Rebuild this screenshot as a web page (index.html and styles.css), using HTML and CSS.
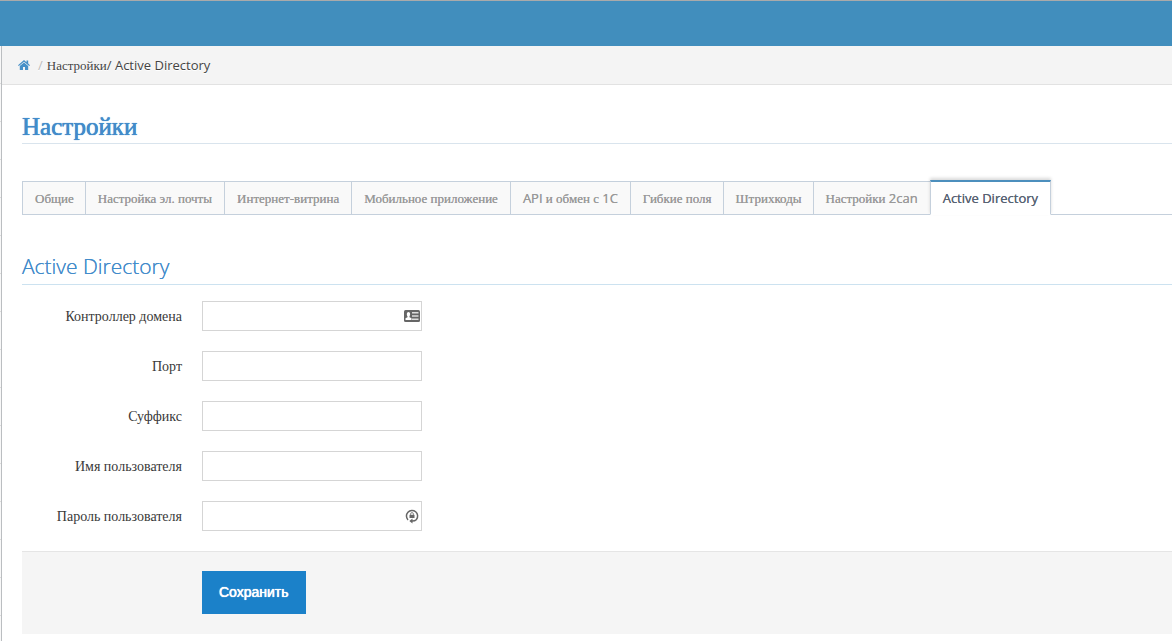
FILE: index.html
```html
<!DOCTYPE html>
<html lang="ru">
<head>
<meta charset="utf-8">
<meta name="viewport" content="width=device-width, initial-scale=1">
<title>Настройки / Active Directory</title>
<link rel="stylesheet" href="styles.css">
</head>
<body>
<header class="navbar"></header>
<div class="layout">
  <aside class="sidebar"></aside>
  <div class="main">
    <nav class="breadcrumbs">
      <a class="home" href="#" aria-label="Главная"><svg width="12" height="10" viewBox="0 0 12 10"><path d="M6 0 0 5.2l.8.9L6 1.7l5.2 4.4.8-.9L10.200 3.600V.6H8.500v1.600z"/><path d="M6 2.600 1.800 6.100V10H5V7h2v3h3.200V6.100z"/></svg></a>
      <span class="divider">/</span>
      <span>Настройки<span class="latin">/ Active Directory</span></span>
    </nav>
    <main class="content">
      <h1 class="title">Настройки</h1>
      <nav class="tabs">
        <a class="tab snug" href="#">Общие</a>
        <a class="tab" href="#">Настройка эл. почты</a>
        <a class="tab" href="#">Интернет-витрина</a>
        <a class="tab" href="#">Мобильное приложение</a>
        <a class="tab" href="#"><span class="latin">API</span> и обмен с <span class="latin">1С</span></a>
        <a class="tab snug" href="#">Гибкие поля</a>
        <a class="tab snug" href="#">Штрихкоды</a>
        <a class="tab" href="#">Настройки <span class="latin">2can</span></a>
        <a class="tab active latin" href="#" aria-current="page">Active Directory</a>
      </nav>
      <h2 class="subtitle">Active Directory</h2>
      <form class="form">
        <div class="row">
          <label for="host">Контроллер домена</label>
          <div class="field">
            <input id="host" type="text">
            <svg class="mark card" width="16" height="12" viewBox="0 0 16 12"><rect width="16" height="12" rx="1.500" fill="#666"/><path d="M1.500 10V8.300l2-1V6.200C2.500 5.200 2.600 2 4.500 2S6.500 5.200 5.500 6.200v1.100l2 1V10z" fill="#fff"/><path d="M8 2h6.500v1.500H8zM8 5.200h6.500v1.500H8zM8 8.400h6.500v1.500H8z" fill="#ddd"/></svg>
          </div>
        </div>
        <div class="row">
          <label for="port">Порт</label>
          <div class="field"><input id="port" type="text"></div>
        </div>
        <div class="row">
          <label for="suffix">Суффикс</label>
          <div class="field"><input id="suffix" type="text"></div>
        </div>
        <div class="row">
          <label for="user">Имя пользователя</label>
          <div class="field"><input id="user" type="text"></div>
        </div>
        <div class="row">
          <label for="password">Пароль пользователя</label>
          <div class="field">
            <input id="password" type="password">
            <svg class="mark lock" width="14" height="15" viewBox="0 0 14 15"><path d="M3 10.900A5.600 5.600 0 1 1 11.500 10.400Q10 12 7 12" fill="none" stroke="#666" stroke-width="1.500"/><path d="M7.500 9.500v5L4.300 12z" fill="#666"/><path d="M4.500 5.800h5V9h-5z" fill="#666"/><path d="M5.600 6V5a1.400 1.400 0 0 1 2.800 0v1" fill="none" stroke="#888"/></svg>
          </div>
        </div>
        <div class="actions"><button class="save" type="submit">Сохранить</button></div>
      </form>
    </main>
  </div>
</div>
</body>
</html>
```
FILE: styles.css
```css
* {
  box-sizing: border-box;
}

body {
  margin: 0;
  background: #fff;
  color: #393939;
  font: 13px/20px "Liberation Serif", serif;
}

.latin {
  font-family: "Open Sans", sans-serif;
}

.navbar {
  height: 46px;
  border-top: 1px solid #aaa;
  background: #418ebd;
}

.layout {
  display: flex;
  min-height: calc(100vh - 46px);
}

.sidebar {
  flex: none;
  width: 2px;
  border-right: 1px solid #bbbec1;
  background: repeating-linear-gradient(#f8f8f8 0 37px, #ddd 37px 38px);
}

.main {
  flex: 1;
  min-width: 0;
}

.breadcrumbs {
  display: flex;
  align-items: center;
  height: 39px;
  padding-left: 16px;
  border-bottom: 1px solid #e2e2e2;
  background: #f4f4f4;
  color: #444;
  text-shadow: 0 1px 0 #fff;
}

.home {
  display: flex;
  margin-right: 8px;
  fill: #4590c8;
}

.divider {
  margin-right: 4px;
  color: #bbb;
  font-family: "Open Sans", sans-serif;
}

.content {
  padding: 27px 0 8px 20px;
}

.title {
  margin: 0 0 36px;
  padding-bottom: 2px;
  border-bottom: 1px solid #d9e4ed;
  color: #428bca;
  font-size: 25px;
  line-height: 29px;
  font-weight: 400;
  text-shadow: 0 0 0 currentColor, 0 0 1px currentColor;
}

.tabs {
  display: flex;
  align-items: flex-end;
  border-bottom: 1px solid #c5d0dc;
}

.tab {
  flex: none;
  height: 34px;
  margin: 0 -1px -1px 0;
  padding: 7px 12px;
  border: 1px solid #c5d0dc;
  background: #f9f9f9;
  color: #999;
  text-decoration: none;
  text-shadow: 0 0 0 currentColor;
  white-space: nowrap;
}

.tab.snug {
  padding-right: 11px;
}

.tab .latin {
  line-height: 1px;
}

.tab.active {
  position: relative;
  height: 35px;
  padding-top: 6px;
  border-top: 2px solid #4c8fbd;
  border-bottom-color: #fff;
  background: #fff;
  color: #576373;
  box-shadow: 0 -2px 3px rgba(0, 0, 0, 0.15);
}

.subtitle {
  margin: 36px 0 16px;
  padding-bottom: 2px;
  border-bottom: 1px solid #cce2f0;
  color: #428bca;
  font-family: "Open Sans", sans-serif;
  font-size: 21px;
  line-height: 31px;
  font-weight: 300;
  text-shadow: 0 0 0 currentColor;
}

.row {
  display: flex;
  align-items: center;
  gap: 20px;
  margin-bottom: 20px;
}

.row label {
  width: 160px;
  padding-top: 2px;
  font-size: 14px;
  text-align: right;
}

.field {
  position: relative;
  width: 220px;
}

.field input {
  display: block;
  width: 100%;
  height: 30px;
  padding: 4px 24px 4px 6px;
  border: 1px solid #d5d5d5;
  border-radius: 0;
  background: #fff;
  font: 14px "Open Sans", sans-serif;
}

.mark {
  position: absolute;
  pointer-events: none;
}

.card {
  top: 9px;
  right: 2px;
}

.lock {
  top: 8px;
  right: 3px;
}

.actions {
  padding: 19px 0 20px 180px;
  border-top: 1px solid #e5e5e5;
  background: #f5f5f5;
}

.save {
  display: block;
  height: 43px;
  padding: 0 17px 2px;
  border: 0;
  background: #1b81c9;
  color: #fff;
  font: 14px "Liberation Sans", Arial, sans-serif;
  text-shadow: 0 0 0 #fff, 0 0 1px #fff;
}
```
